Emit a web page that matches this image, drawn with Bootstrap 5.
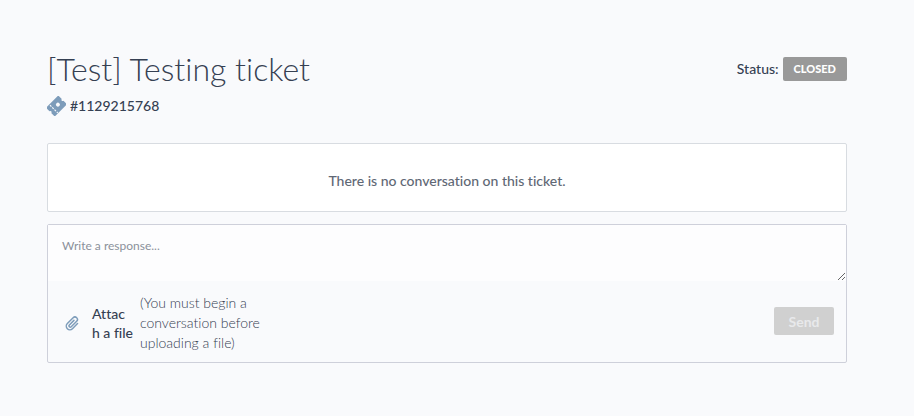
<!DOCTYPE html>
<html lang="en">
<head>
<meta charset="utf-8">
<meta name="viewport" content="width=device-width, initial-scale=1">
<title>[Test] Testing ticket</title>
<link href="https://cdn.jsdelivr.net/npm/bootstrap@5.3.0/dist/css/bootstrap.min.css" rel="stylesheet">
<style>
body { background: #f9fafc; color: #354052; font-family: Lato, sans-serif; font-size: 14px; font-weight: 500; line-height: 20px; font-variant-ligatures: none; }
.ticket-page { padding: 49px 67px 48px 47px; }
.ticket-title { font-size: 32px; line-height: 40px; font-weight: 300; }
.ticket-number { margin-top: 7px; gap: 4px; }
.ticket-icon { width: 19px; height: 20px; }
.status-closed { background: #999; padding: 6px 11px; font-size: 11px; line-height: 12px; font-weight: 900; border-radius: 2px; }
.empty-box { margin-top: 27px; padding: 27px 16px 20px; border: 1px solid #d8dce1; border-radius: 2px; color: #5f6875; }
.reply-box { margin-top: 12px; border: 1px solid #ced0da; border-radius: 2px; }
.reply-text { height: 56px; min-height: 56px; padding: 11px 14px; font-size: 12px; line-height: 20px; background: #fdfdfe; resize: vertical; }
.reply-text::placeholder { color: #8b919b; }
.reply-text:focus { box-shadow: none; }
.reply-bar { padding: 12px 12px 9px 17px; }
.clip-icon { width: 15px; height: 15px; }
.attach-label { width: 44px; margin-left: 12px; line-height: 19px; }
.attach-note { width: 136px; margin-left: 4px; font-weight: 300; }
.send-btn, .send-btn:disabled { width: 60px; height: 28px; margin-bottom: 4px; padding: 0; border: 0; border-radius: 2px; background: #d0d0d0; color: #e8e9eb; font-size: 14px; font-weight: 700; opacity: 1; }
</style>
</head>
<body>
<main class="ticket-page">
  <header class="d-flex justify-content-between align-items-center">
    <h1 class="ticket-title m-0">[Test] Testing ticket</h1>
    <div class="d-flex align-items-center gap-1"><span>Status:</span><span class="badge status-closed">CLOSED</span></div>
  </header>
  <div class="ticket-number d-flex align-items-center">
    <svg class="ticket-icon" viewBox="0 0 19 20" aria-hidden="true">
      <g transform="rotate(-45 9.5 10)">
        <path fill="#7d9cba" d="M.8 3.8h17.4v5a1.2 1.2 0 0 0 0 2.4v5H.8v-5a1.2 1.2 0 0 0 0-2.4z"/>
        <path stroke="#f9fafc" stroke-width="1.2" stroke-dasharray="2 1.2" d="M5.5 4.8v11"/>
        <circle cx="11.5" cy="10" r="2" fill="#f9fafc"/>
      </g>
    </svg>
    <span>#1129215768</span>
  </div>
  <section class="empty-box bg-white text-center">There is no conversation on this ticket.</section>
  <form class="reply-box">
    <textarea class="reply-text form-control border-0 rounded-0 d-block" aria-label="Response" placeholder="Write a response..."></textarea>
    <div class="reply-bar d-flex align-items-center">
      <svg class="clip-icon flex-shrink-0" viewBox="0 0 14 15" aria-hidden="true">
        <path transform="rotate(45 7 7.5)" fill="none" stroke="#7d9cba" stroke-width="1.5" stroke-linecap="round" d="M10.6 4v7.2a3.6 3.6 0 0 1-7.2 0V3a2.5 2.5 0 0 1 5 0v7.7a1.3 1.3 0 0 1-2.6 0V4.3"/>
      </svg>
      <span class="attach-label">Attac<wbr>h&nbsp;a&nbsp;file</span>
      <span class="attach-note">(You must begin a conversation before uploading a file)</span>
      <button type="button" class="btn send-btn ms-auto" disabled>Send</button>
    </div>
  </form>
</main>
<script src="https://cdn.jsdelivr.net/npm/bootstrap@5.3.0/dist/js/bootstrap.bundle.min.js"></script>
</body>
</html>
